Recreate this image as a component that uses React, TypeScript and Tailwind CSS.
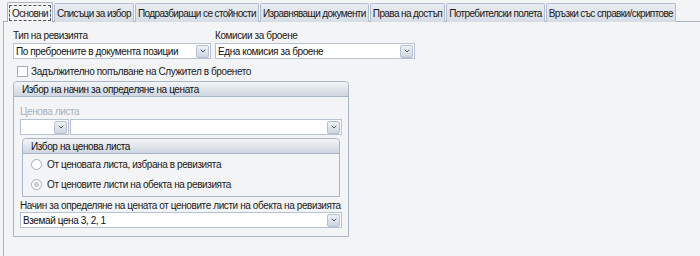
import { ChevronDown } from "lucide-react"

const tabs = [
  "Основни",
  "Списъци за избор",
  "Подразбиращи се стойности",
  "Изравняващи документи",
  "Права на достъп",
  "Потребителски полета",
  "Връзки със справки/скриптове",
]

function DropBtn() {
  return (
    <div className="w-[13px] h-[13px] mr-[1px] flex items-center justify-center border border-[#b4bfcf] rounded-[2px] bg-gradient-to-b from-[#eef1f5] to-[#cdd5e0]">
      <ChevronDown className="w-[8px] h-[8px] text-[#4a5566]" strokeWidth={3} />
    </div>
  )
}

function Combo({ text, className }: { text?: string; className: string }) {
  return (
    <div className={`h-[16px] bg-white border border-[#b7c3d5] flex items-center ${className}`}>
      <span className="flex-1 pl-[2px] whitespace-nowrap overflow-hidden text-[#111]">{text}</span>
      <DropBtn />
    </div>
  )
}

function GroupHeader({ title }: { title: string }) {
  return (
    <div className="h-[15px] flex items-center pl-[8px] bg-gradient-to-b from-[#f4f6f8] to-[#cfd6e0] border-b border-[#a8b5c8] rounded-t-[4px] text-[#111]">
      {title}
    </div>
  )
}

function Radio({ label, checked }: { label: string; checked?: boolean }) {
  return (
    <div className="flex items-center h-[20px] pl-[8px]">
      <div className="w-[11px] h-[11px] rounded-full border border-[#a7adb5] bg-white flex items-center justify-center">
        {checked && <div className="w-[5px] h-[5px] rounded-full bg-[#c7ccd3]" />}
      </div>
      <span className="ml-[5px]">{label}</span>
    </div>
  )
}

export default function App() {
  return (
    <div className="w-[700px] h-[256px] bg-[#f3f4f6] text-[10px] tracking-[-0.4px] leading-[13px] text-[#1a1a1a] overflow-hidden whitespace-nowrap" style={{ fontFamily: '"Liberation Sans", Arial, sans-serif' }}>
      <div className="flex items-end h-[22px] pl-[7px] pt-[2px] tracking-[-0.6px]">
        {tabs.map((t, i) =>
          i === 0 ? (
            <div key={t} className="h-[20px] px-[1px] pt-[2px] mr-[1px] bg-[#f3f4f6] border border-b-0 border-[#a9b5c6] rounded-t-[2px] relative z-10">
              <div className="h-[16px] px-[2px] flex items-center border border-dashed border-[#555]">{t}</div>
            </div>
          ) : (
            <div key={t} className="h-[19px] px-[2px] mr-[1px] flex items-center bg-gradient-to-b from-[#eaedf2] to-[#d6dce5] border border-b-0 border-[#b3bfce] rounded-t-[2px]">
              {t}
            </div>
          )
        )}
      </div>
      <div className="ml-[3px] -mt-[1px] h-[240px] border-l border-t border-[#a9b5c6] pl-[9px] pt-[7px]">
        <div className="flex gap-[4px]">
          <div className="w-[198px]">
            <div className="h-[14px]">Тип на ревизията</div>
            <Combo className="w-[198px]" text="По преброените в документа позиции" />
          </div>
          <div className="w-[200px]">
            <div className="h-[14px]">Комисии за броене</div>
            <Combo className="w-[200px]" text="Една комисия за броене" />
          </div>
        </div>
        <div className="flex items-center h-[14px] mt-[5px] pl-[4px]">
          <div className="w-[11px] h-[11px] border border-[#a7adb5] bg-white" />
          <span className="ml-[3px]">Задължително попълване на Служител в броенето</span>
        </div>
        <div className="mt-[3px] w-[336px] h-[156px] border border-[#a8b5c8] rounded-t-[4px]">
          <GroupHeader title="Избор на начин за определяне на цената" />
          <div className="px-[6px] pt-[8px]">
            <div className="h-[14px] text-[#a9b1bd]">Ценова листа</div>
            <div className="flex gap-[1px]">
              <Combo className="w-[49px]" />
              <Combo className="flex-1" />
            </div>
            <div className="mt-[3px] mx-[2px] h-[59px] border border-[#a8b5c8] rounded-t-[4px]">
              <GroupHeader title="Избор на ценова листа" />
              <div>
                <Radio label="От ценовата листа, избрана в ревизията" />
                <Radio label="От ценовите листи на обекта на ревизията" checked />
              </div>
            </div>
            <div className="h-[13px] mt-[2px]">Начин за определяне на цената от ценовите листи на обекта на ревизията</div>
            <Combo className="w-full" text="Вземай цена 3, 2, 1" />
          </div>
        </div>
      </div>
    </div>
  )
}
